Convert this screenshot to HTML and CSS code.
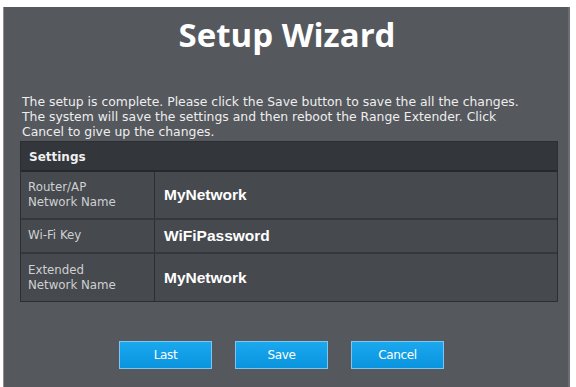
FILE: index.html
```html
<!DOCTYPE html>
<html>
<head>
<meta charset="utf-8">
<link rel="stylesheet" href="styles.css">
</head>
<body>
<div class="panel">
  <h1 class="title">Setup Wizard</h1>
  <p class="intro">The setup is complete. Please click the Save button to save the all the changes.<br>The system will save the settings and then reboot the Range Extender. Click<br>Cancel to give up the changes.</p>
  <div class="table">
    <div class="thead">Settings</div>
    <div class="row tall">
      <div class="label">Router/AP<br>Network Name</div>
      <div class="value">MyNetwork</div>
    </div>
    <div class="row short">
      <div class="label">Wi-Fi Key</div>
      <div class="value">WiFiPassword</div>
    </div>
    <div class="row tall last-row">
      <div class="label">Extended<br>Network Name</div>
      <div class="value">MyNetwork</div>
    </div>
  </div>
  <div class="buttons">
    <button class="btn">Last</button>
    <button class="btn">Save</button>
    <button class="btn">Cancel</button>
  </div>
</div>
</body>
</html>
```
FILE: styles.css
```css
html, body {
  margin: 0;
  padding: 0;
  background: #ffffff;
}
body {
  width: 576px;
  height: 387px;
  overflow: hidden;
}
.panel {
  margin: 7px 0 0 3px;
  width: 567px;
  height: 380px;
  box-sizing: border-box;
  background: #55585d;
  border-left: 1px solid #8a8c90;
  border-right: 2px solid #6a6d71;
  padding: 0 0 0 16px;
  font-family: "DejaVu Sans", Verdana, sans-serif;
  color: #f2f2f2;
}
.title {
  margin: 0;
  padding-top: 8px;
  height: 52px;
  text-align: center;
  font-family: "Open Sans", "DejaVu Sans", sans-serif;
  font-weight: 700;
  font-size: 33px;
  line-height: 40px;
  color: #ffffff;
  padding-right: 14px;
}
.intro {
  margin: 27px 0 0 2px;
  height: 47px;
  width: 540px;
  white-space: nowrap;
  font-size: 12.4px;
  line-height: 15px;
  color: #eeeeee;
}
.table {
  margin-top: 0;
  width: 538px;
  box-sizing: border-box;
  border: 1px solid #2c2e32;
  background: #46494e;
}
.thead {
  height: 30px;
  box-sizing: border-box;
  background: #33363a;
  border-bottom: 2px solid #26282b;
  padding: 8px 0 0 8px;
  font-weight: 700;
  font-size: 12px;
  color: #f0f0f0;
}
.row {
  display: flex;
  border-bottom: 2px solid #35373b;
  box-sizing: border-box;
}
.row.tall { height: 48px; }
.row.short { height: 34px; }
.row.last-row { border-bottom: none; height: 47px; }
.label {
  width: 134px;
  flex: none;
  box-sizing: border-box;
  border-right: 1px solid #2c2e32;
  padding-left: 7px;
  display: flex;
  align-items: center;
  font-size: 11.8px;
  line-height: 15px;
  color: #cfd0d2;
}
.short .label { align-items: flex-start; padding-top: 8px; }
.value {
  flex: 1;
  display: flex;
  align-items: center;
  padding-left: 9px;
  font-family: "Liberation Sans", Arial, sans-serif;
  font-weight: 700;
  font-size: 15.5px;
  color: #ffffff;
}
.buttons {
  display: flex;
  gap: 23px;
  margin: 39px 0 0 99px;
}
.btn {
  width: 93px;
  height: 28px;
  box-sizing: border-box;
  border: 1px solid #7fc6ee;
  background: linear-gradient(#1aa8ee, #0a94df);
  color: #ffffff;
  font-family: "DejaVu Sans", Verdana, sans-serif;
  font-size: 12px;
  letter-spacing: -0.4px;
  padding: 0;
}
```
